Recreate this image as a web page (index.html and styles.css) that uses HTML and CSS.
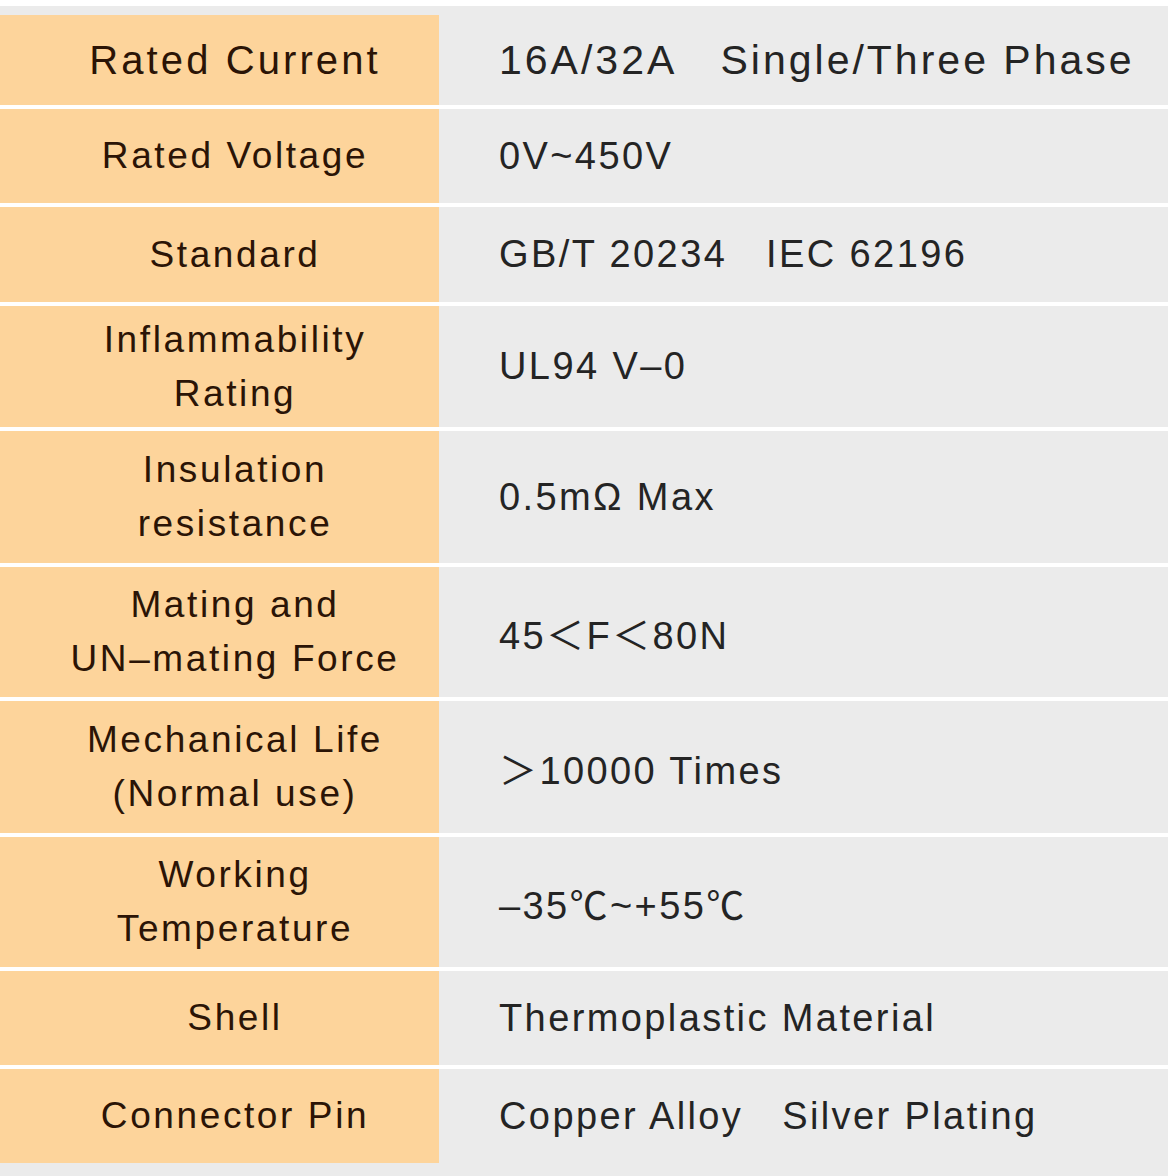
FILE: index.html
```html
<!DOCTYPE html>
<html>
<head>
<meta charset="utf-8">
<link rel="stylesheet" href="styles.css">
</head>
<body>
<div class="sheet">
  <div class="row first">
    <div class="key big">Rated Current</div>
    <div class="val big">16A/32A&nbsp;&nbsp;&nbsp;Single/Three Phase</div>
  </div>
  <div class="row r94">
    <div class="key">Rated Voltage</div>
    <div class="val">0V~450V</div>
  </div>
  <div class="row r95">
    <div class="key">Standard</div>
    <div class="val">GB/T 20234&nbsp;&nbsp;&nbsp;IEC 62196</div>
  </div>
  <div class="row r121">
    <div class="key">Inflammability<br>Rating</div>
    <div class="val">UL94 V–0</div>
  </div>
  <div class="row r132">
    <div class="key">Insulation<br>resistance</div>
    <div class="val">0.5mΩ Max</div>
  </div>
  <div class="row r130">
    <div class="key">Mating and<br>UN–mating Force</div>
    <div class="val">45＜F＜80N</div>
  </div>
  <div class="row r132">
    <div class="key">Mechanical Life<br>(Normal use)</div>
    <div class="val">＞10000 Times</div>
  </div>
  <div class="row r130">
    <div class="key">Working<br>Temperature</div>
    <div class="val">–35℃~+55℃</div>
  </div>
  <div class="row r94">
    <div class="key">Shell</div>
    <div class="val">Thermoplastic Material</div>
  </div>
  <div class="row r94">
    <div class="key">Connector Pin</div>
    <div class="val">Copper Alloy&nbsp;&nbsp;&nbsp;Silver Plating</div>
  </div>
</div>
<div class="tail"></div>
</body>
</html>
```
FILE: styles.css
```css
html, body {
  margin: 0;
  padding: 0;
  background: #ffffff;
}
.sheet {
  width: 1168px;
  padding-top: 6px;
  display: flex;
  flex-direction: column;
  gap: 4px;
  font-family: "Liberation Sans", "Noto Sans CJK SC", sans-serif;
}
.row {
  display: flex;
  background: #ebebeb;
}
.row.first {
  height: 99px;
}
.row.first .key,
.row.first .val {
  margin-top: 9px;
}
.r94 { height: 94px; }
.r95 { height: 95px; }
.r121 { height: 121px; }
.r130 { height: 130px; }
.r132 { height: 132px; }
.key {
  width: 439px;
  flex: none;
  background: #fdd49b;
  color: #2b1406;
  font-size: 37px;
  line-height: 54px;
  letter-spacing: 2.6px;
  text-align: center;
  padding-left: 31px;
  box-sizing: border-box;
  display: flex;
  align-items: center;
  justify-content: center;
}
.val {
  flex: 1;
  color: #242424;
  font-size: 38px;
  letter-spacing: 2.4px;
  padding-left: 60px;
  display: flex;
  align-items: center;
  white-space: nowrap;
}
.key.big {
  font-size: 40px;
  letter-spacing: 3.1px;
}
.val.big {
  font-size: 41px;
  letter-spacing: 3px;
}
.tail {
  width: 1168px;
  height: 13px;
  background: #ebebeb;
}
```
